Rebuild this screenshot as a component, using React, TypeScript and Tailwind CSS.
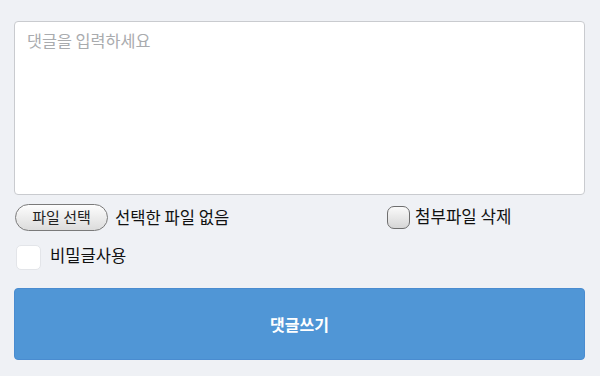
import React from 'react';

const font = { fontFamily: '"Noto Sans CJK KR", "Noto Sans", sans-serif' };

export default function App() {
  return (
    <div className="w-[600px] h-[376px] bg-[#eff1f5] pt-[21px] pl-[14px] pr-[15px]" style={font}>
      {/* comment box */}
      <div className="h-[174px] bg-white border border-[#c9cbcf] rounded-[4px] px-[12px] pt-[6px]">
        <span className="text-[16.3px] leading-[24px] text-[#a9abae]">댓글을 입력하세요</span>
      </div>

      {/* file row */}
      <div className="flex items-center mt-[8px] h-[28px]">
        <div className="w-[373px] flex items-center">
          <button className="ml-[1px] h-[27px] w-[93px] rounded-full border border-[#7a7a7a] bg-gradient-to-b from-[#fdfdfd] to-[#dcdcdc] text-[15px] text-[#222] flex items-center justify-center">
            파일 선택
          </button>
          <span className="ml-[7px] text-[16.6px] text-[#111]">선택한 파일 없음</span>
        </div>
        <div className="flex items-center">
          <span className="w-[23px] h-[23px] rounded-[7px] border border-[#6e6e6e] bg-gradient-to-b from-[#fafafa] to-[#d6d6d6]" />
          <span className="ml-[5px] text-[16.8px] text-[#111]">첨부파일 삭제</span>
        </div>
      </div>

      {/* secret row */}
      <div className="flex items-center mt-[13px] h-[26px]">
        <span className="ml-[2px] w-[25px] h-[25px] rounded-[5px] bg-white border border-[#e3e5e9]" />
        <span className="ml-[9px] -mt-[3px] text-[16.6px] text-[#111]">비밀글사용</span>
      </div>

      {/* submit */}
      <button className="mt-[18px] w-full h-[72px] rounded-[4px] bg-[#5096d6] border border-[#4a8cd0] text-white text-[16px] font-bold">
        댓글쓰기
      </button>
    </div>
  );
}
